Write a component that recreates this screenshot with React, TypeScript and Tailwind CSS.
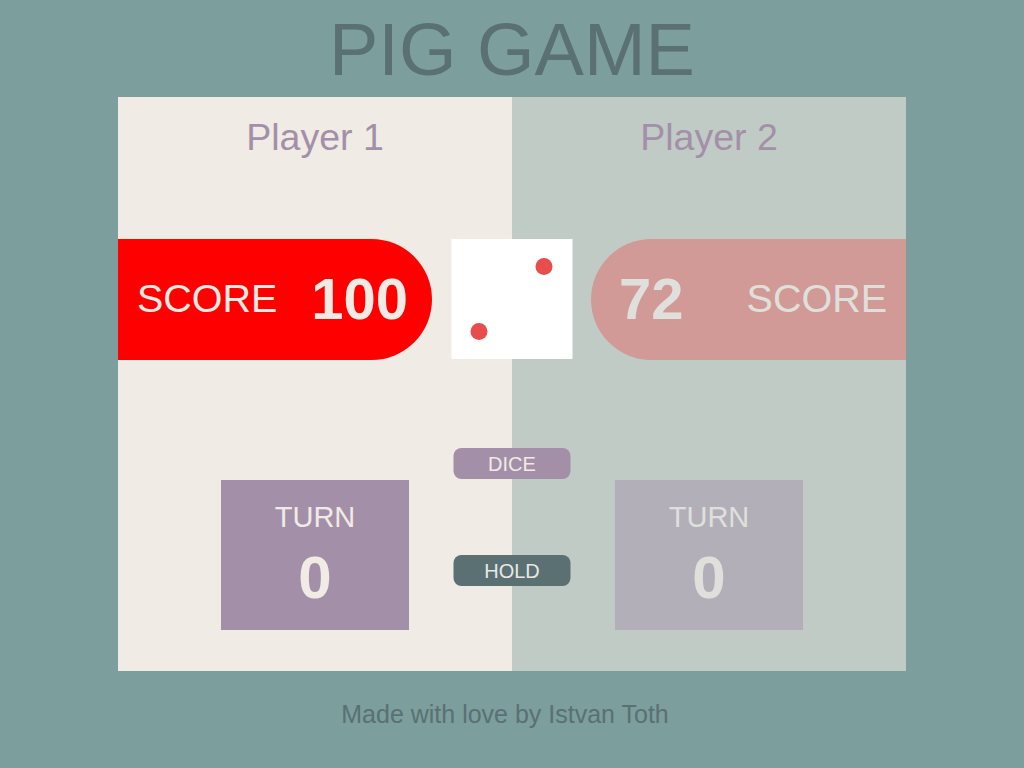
import { useState } from "react";

type Player = {
  name: string;
  score: number;
  turn: number;
};

const font = "font-['Liberation_Sans',Arial,sans-serif]";

function Die() {
  return (
    <div className="relative h-[120px] w-[121px] bg-white">
      <span className="absolute left-[84px] top-[19px] h-[17px] w-[17px] rounded-full bg-[#e84c4c]" />
      <span className="absolute left-[19px] top-[84px] h-[17px] w-[17px] rounded-full bg-[#e84c4c]" />
    </div>
  );
}

function PlayerPanel({ player, active, side }: { player: Player; active: boolean; side: "left" | "right" }) {
  const left = side === "left";
  return (
    <div className={`flex flex-col ${active ? "bg-[#f0ebe5]" : "bg-[#c1cbc6]"}`}>
      <h2 className="mt-[22px] text-center text-[37.5px] leading-none text-[#a390a8]">{player.name}</h2>

      <div className={`mt-[82px] flex ${left ? "justify-start" : "justify-end"}`}>
        {left ? (
          <div className="flex h-[121px] w-[314px] items-center justify-between rounded-r-full bg-[#ff0000] pl-[19px] pr-[24px] text-[#f0ebe4]">
            <span className="text-[39.5px] leading-none">SCORE</span>
            <span className="text-[58px] font-bold leading-none">{player.score}</span>
          </div>
        ) : (
          <div className="flex h-[121px] w-[315px] items-center justify-between rounded-l-full bg-[#d19a96] pl-[28px] pr-[19px] text-[#dfe0dc]">
            <span className="text-[58px] font-bold leading-none">{player.score}</span>
            <span className="text-[39.5px] leading-none">SCORE</span>
          </div>
        )}
      </div>

      <div
        className={`mx-auto mt-[120px] flex h-[150px] w-[188px] flex-col items-center ${
          active ? "bg-[#a390a8] text-[#f0ebe4]" : "bg-[#b3afb9] text-[#dfe0dc]"
        }`}
      >
        <span className="mt-[23px] text-[29px] leading-none">TURN</span>
        <span className="mt-[16px] text-[60px] font-bold leading-none">{player.turn}</span>
      </div>
    </div>
  );
}

export default function App() {
  const [players] = useState<Player[]>([
    { name: "Player 1", score: 100, turn: 0 },
    { name: "Player 2", score: 72, turn: 0 },
  ]);
  const active = 0;

  return (
    <div className={`${font} flex min-h-[768px] flex-col items-center bg-[#7c9e9d]`}>
      <h1 className="mt-[13px] text-[74px] leading-none text-[#5a7073]">PIG GAME</h1>

      <div className="relative mt-[10px] grid h-[574px] w-[788px] grid-cols-2">
        {players.map((p, i) => (
          <PlayerPanel key={p.name} player={p} active={i === active} side={i === 0 ? "left" : "right"} />
        ))}

        <div className="absolute left-1/2 top-[142px] flex -translate-x-1/2 flex-col items-center">
          <Die />
          <button className="mt-[89px] h-[31px] w-[117px] cursor-pointer rounded-[8px] bg-[#a390a8] text-[20px] leading-none text-[#f0ebe4]">
            DICE
          </button>
          <button className="mt-[76px] h-[31px] w-[117px] cursor-pointer rounded-[8px] bg-[#5a7073] text-[20px] leading-none text-[#e8e8e4]">
            HOLD
          </button>
        </div>
      </div>

      <p className="mt-[31px] pr-[14px] text-[25px] leading-none text-[#5a7073]">Made with love by Istvan Toth</p>
    </div>
  );
}
